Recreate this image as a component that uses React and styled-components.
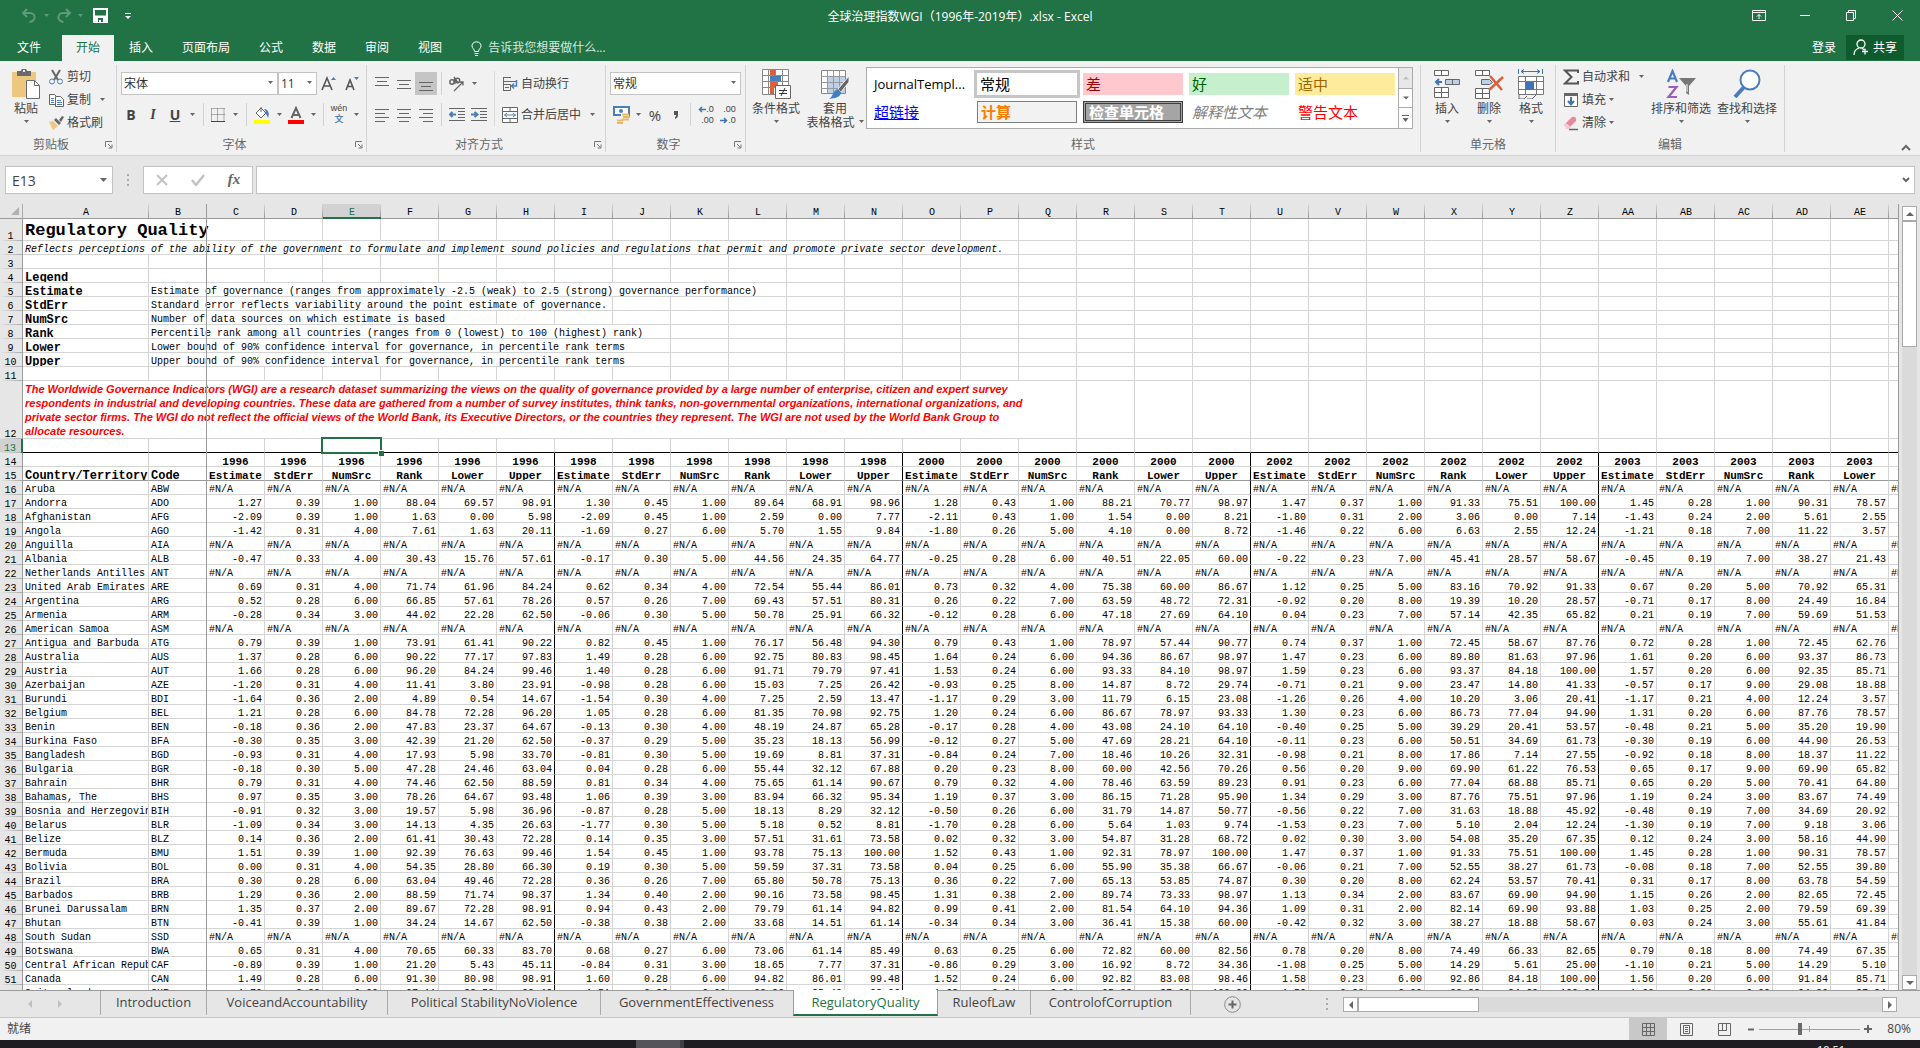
import React from "react";
import styled, { createGlobalStyle, css } from "styled-components";

const GREEN = "#217346";
const UI = '"Open Sans", "Noto Sans CJK SC", sans-serif';
const MONO = '"Liberation Mono", "Noto Sans CJK SC", monospace';

const Global = createGlobalStyle`
  *, *::before, *::after { box-sizing: border-box; }
  html, body { margin: 0; height: 100%; overflow: hidden; }
  #root { height: 100%; }
  button, input, select { font: inherit; color: inherit; margin: 0; }
`;

const Window = styled.div`
  height: 100vh;
  display: flex;
  flex-direction: column;
  overflow: hidden;
  background: #e6e6e6;
  color: #444;
  font: 12px/14px ${UI};
`;

const PlainButton = styled.button.attrs({ type: "button" })`
  display: inline-flex;
  align-items: center;
  justify-content: center;
  padding: 0;
  border: 0;
  background: none;
  white-space: nowrap;
`;

/* ---------- title bar ---------- */

const TitleBar = styled.header`
  display: grid;
  grid-template-columns: 1fr auto 1fr;
  height: 35px;
  background: ${GREEN};
  color: #fff;
`;

const QuickAccess = styled.div`
  display: flex;
  align-items: center;
  padding: 0 0 4px 20px;
`;

const QuickButton = styled(PlainButton)`
  width: ${(p) => p.$w}px;
  height: 20px;
`;

const DocTitle = styled.h1`
  margin: 0;
  font-size: 12px;
  font-weight: 400;
  line-height: 33px;
`;

const WindowButtons = styled.div`
  display: flex;
  justify-content: flex-end;
`;

const WindowButton = styled(PlainButton)`
  width: 46px;
  height: 30px;
`;

const TabRow = styled.nav`
  display: flex;
  height: 26px;
  padding-right: 16px;
  background: ${GREEN};
  color: #fff;
`;

const RibbonTab = styled(PlainButton)`
  padding: 0 14px;
  margin-right: 1px;
  line-height: 22px;
  ${(p) => p.$file && css`padding: 0 20px 0 17px;`}
  ${(p) => p.$active && css`background: #f1f1f1; color: ${GREEN};`}
`;

const TellMe = styled(PlainButton)`
  gap: 6px;
  margin-left: 14px;
  color: #d6e8de;
`;

const SignIn = styled(PlainButton)`
  margin-left: auto;
  padding: 0 10px;
`;

const Share = styled(PlainButton)`
  gap: 4px;
  width: 58px;
  height: 25px;
  background: #0f5b2e;
`;

/* ---------- ribbon ---------- */

const Ribbon = styled.div`
  display: flex;
  height: 95px;
  padding: 4px 0 3px;
  background: #f1f1f1;
  border-bottom: 1px solid #d2d2d2;
`;

const GroupBox = styled.section`
  display: flex;
  flex-direction: column;
  width: ${(p) => p.$w}px;
  border-right: 1px solid #d2d2d2;
`;

const GroupBody = styled.div`
  display: flex;
  flex: 1;
  padding-left: ${(p) => p.$pad || 0}px;
`;

const GroupFooter = styled.div`
  display: flex;
  align-items: center;
  height: 14px;
  color: #666;
`;

const GroupName = styled.span`
  flex: 1;
  text-align: center;
`;

const Launcher = styled(PlainButton)`
  width: 14px;
  height: 14px;
`;

const Stack = styled.div`
  display: flex;
  flex-direction: column;
  gap: ${(p) => p.$gap || 0}px;
  padding-top: ${(p) => p.$top || 0}px;
`;

const Line = styled.div`
  display: flex;
  height: 23px;
`;

const Tool = styled(PlainButton)`
  width: ${(p) => p.$w || 22}px;
  height: 23px;
  ${(p) => p.$on && css`background: #c5c5c5;`}
  ${(p) => p.$bold && css`font-weight: 700; font-size: 14px;`}
  ${(p) => p.$italic && css`font-style: italic; font-family: "Liberation Serif", serif;`}
  ${(p) => p.$underline && css`text-decoration: underline;`}
  ${(p) => p.$large && css`font-size: 15px;`}
  ${(p) => p.$soft && css`color: #666;`}
`;

const TextTool = styled(PlainButton)`
  height: 23px;
  gap: 3px;
  padding-left: 3px;
  justify-content: flex-start;
  width: ${(p) => (p.$w ? `${p.$w}px` : "auto")};
`;

const CaretSlot = styled.span`
  display: inline-flex;
  margin-left: ${(p) => (p.$far ? 6 : 0)}px;
`;

const Rule = styled.span`
  width: 1px;
  margin: 0 4px;
  background: #d2d2d2;
`;

const TallRule = styled.span`
  width: 1px;
  height: 55px;
  margin: 6px 4px 0;
  background: #dadada;
`;

const BigTool = styled(PlainButton)`
  flex-direction: column;
  justify-content: flex-start;
  width: ${(p) => p.$w}px;
  padding-top: 4px;
  line-height: 14px;
  svg:first-child { margin-bottom: 3px; }
`;

const BigCaret = styled.span`
  display: flex;
  align-items: center;
  height: 14px;
  gap: 4px;
`;

const ComboBox = styled.label`
  position: relative;
  display: block;
  width: ${(p) => p.$w}px;
  height: 23px;
  svg { position: absolute; right: 5px; top: 9px; pointer-events: none; }
`;

const ComboSelect = styled.select`
  appearance: none;
  width: 100%;
  height: 23px;
  padding: 0 0 0 2px;
  border: 1px solid #c3c3c3;
  border-radius: 0;
  background: #fff;
  color: #333;
`;

const Gallery = styled.div`
  display: flex;
  width: 547px;
  height: 62px;
  margin: 2px 0 0 2px;
  border: 1px solid #ababab;
  background: #fff;
`;

const GalleryGrid = styled.div`
  flex: 1;
  display: grid;
  grid-template-columns: repeat(5, 100px);
  grid-auto-rows: 22px;
  gap: 6px;
  padding: 5px 0 0 4px;
`;

const StyleCell = styled(PlainButton)`
  justify-content: flex-start;
  padding-left: 3px;
  font-size: ${(p) => p.$size || 15}px;
  line-height: 18px;
  color: ${(p) => p.$fg || "#000"};
  background: ${(p) => p.$bg || "transparent"};
  font-weight: ${(p) => (p.$bold ? 700 : 400)};
  font-style: ${(p) => (p.$italic ? "italic" : "normal")};
  border: ${(p) => p.$border || "0"};
  text-decoration: ${(p) => (p.$link ? "underline" : "none")};
  ${(p) => p.$selected && css`outline: 3px solid #c6c6c6;`}
`;

const GalleryScroll = styled.div`
  display: grid;
  grid-template-rows: 20px 19px 1fr;
  width: 14px;
  border-left: 1px solid #ababab;
  button + button { border-top: 1px solid #ababab; }
  button:first-child { background: #e8e8e8; }
`;

const CollapseSlot = styled.div`
  display: flex;
  flex: 1;
  align-items: flex-end;
  justify-content: flex-end;
  padding-right: 9px;
`;

/* ---------- formula bar ---------- */

const FormulaRow = styled.div`
  display: flex;
  padding: 10px 5px;
`;

const NameBox = styled.label`
  display: flex;
  align-items: center;
  width: 108px;
  height: 28px;
  padding-right: 5px;
  border: 1px solid #c3c3c3;
  background: #fff;
`;

const NameInput = styled.input`
  flex: 1;
  min-width: 0;
  padding: 0 0 0 6px;
  border: 0;
  background: transparent;
  font-size: 14px;
`;

const Dots = styled.span`
  display: flex;
  align-items: center;
  justify-content: center;
  width: ${(p) => p.$w}px;
`;

const FormulaButtons = styled.div`
  display: grid;
  grid-template-columns: repeat(3, 36px);
  height: 28px;
  border: 1px solid #c3c3c3;
  background: #fff;
`;

const FormulaBox = styled.label`
  display: flex;
  flex: 1;
  align-items: center;
  height: 28px;
  margin-left: 3px;
  padding-right: 4px;
  border: 1px solid #c3c3c3;
  background: #fff;
`;

const FormulaInput = styled.input`
  flex: 1;
  border: 0;
  background: transparent;
`;

/* ---------- sheet ---------- */

const SheetArea = styled.main`
  display: flex;
  flex: 1;
  min-height: 0;
`;

const SheetView = styled.div`
  position: relative;
  flex: 1;
  min-width: 0;
  overflow: hidden;
  border-right: 1px solid #9b9b9b;
`;

const FreezeLine = styled.div`
  position: absolute;
  left: 206px;
  top: 0;
  bottom: 0;
  width: 1px;
  background: #9b9b9b;
`;

const Grid = styled.table`
  table-layout: fixed;
  width: 1947px;
  border-collapse: separate;
  border-spacing: 0;
  background: #fff;
  color: #000;
  font: 10px/8px ${MONO};
`;

const Col = styled.col`
  width: ${(p) => p.$w}px;
`;

const Corner = styled.td`
  height: 15px;
  padding: 0 3px 0 0;
  background: #e6e6e6;
  border-right: 1px solid #ababab;
  border-bottom: 1px solid #9b9b9b;
  text-align: right;
  vertical-align: middle;
  line-height: 0;
`;

const ColHead = styled.th`
  height: 15px;
  padding: 4px 0 0;
  font-weight: 400;
  background: linear-gradient(to bottom, #d6d6d6, #9b9b9b) right / 1px 100% no-repeat #e6e6e6;
  border-bottom: 1px solid #9b9b9b;
  ${(p) => p.$on && css`
    background-color: #d2d2d2;
    color: ${GREEN};
    border-bottom: 2px solid ${GREEN};
  `}
`;

const RowHead = styled.th`
  padding: 5px 1px 0 0;
  font-weight: 400;
  vertical-align: bottom;
  background: linear-gradient(to right, #e6e6e6, #ababab) bottom / 100% 1px no-repeat #e6e6e6;
  border-right: 1px solid #9b9b9b;
  ${(p) => p.$on && css`
    background-color: #d2d2d2;
    color: ${GREEN};
    border-right: 2px solid ${GREEN};
  `}
`;

const Row = styled.tr`
  height: ${(p) => p.$h || 14}px;
`;

const Cell = styled.td`
  padding: 5px 2px 0;
  overflow: hidden;
  white-space: nowrap;
  vertical-align: bottom;
  text-align: ${(p) => p.$align || "left"};
  border-right: 1px solid ${(p) => (p.$block ? "#000" : "#d4d4d4")};
  border-bottom: 1px solid ${(p) => p.$under || "#d4d4d4"};
  ${(p) => p.$kind === "title" && css`
    padding: 3px 0 0 2px;
    font-size: 17px;
    font-weight: 700;
    line-height: 18px;
    overflow: visible;
  `}
  ${(p) => p.$kind === "italic" && css`font-style: italic;`}
  ${(p) => p.$kind === "label" && css`padding-right: 0; font-size: 12px; font-weight: 700;`}
  ${(p) => p.$kind === "head" && css`font-size: 11px; font-weight: 700; padding-left: 0; padding-right: 0;`}
  ${(p) => p.$kind === "note" && css`
    padding-top: 0;
    color: #f00;
    font: italic 700 11px/14px "Liberation Sans", Arial, sans-serif;
  `}
  ${(p) => p.$selected && css`position: relative; overflow: visible;`}
`;

const Selection = styled.span`
  position: absolute;
  inset: -2px;
  border: 2px solid ${GREEN};
  &::after {
    content: "";
    position: absolute;
    right: -4px;
    bottom: -4px;
    width: 6px;
    height: 6px;
    background: ${GREEN};
    border: solid #fff;
    border-width: 1px 0 0 1px;
  }
`;

const ScrollColumn = styled.div`
  display: flex;
  flex-direction: column;
  width: 15px;
  margin: 2px 3px 0;
  background: #dadada;
`;

const ScrollButton = styled(PlainButton)`
  width: 15px;
  height: 15px;
  background: #fff;
  border: 1px solid #ababab;
`;

const ScrollThumb = styled.div`
  background: #fff;
  border: 1px solid #ababab;
  ${(p) => (p.$vertical ? css`height: 126px;` : css`width: 121px;`)}
`;

const Spacer = styled.div`
  flex: 1;
`;

/* ---------- sheet tabs ---------- */

const SheetTabs = styled.nav`
  display: flex;
  height: 28px;
  border-top: 1px solid #9b9b9b;
  border-bottom: 1px solid #c6c6c6;
  font-size: 13px;
`;

const TabArrows = styled.div`
  display: flex;
  align-items: center;
  gap: 22px;
  width: 101px;
  padding-left: 26px;
`;

const SheetTab = styled(PlainButton)`
  width: ${(p) => p.$w}px;
  height: 24px;
  padding-bottom: 2px;
  border-right: 1px solid ${(p) => (p.$plain ? "transparent" : "#ababab")};
  ${(p) => p.$active && css`
    margin-top: -1px;
    height: 26px;
    padding-bottom: 1px;
    background: #fff;
    color: ${GREEN};
    border-left: 1px solid #9b9b9b;
    border-right-color: #9b9b9b;
    border-bottom: 2px solid ${GREEN};
  `}
`;

const FirstRule = styled.span`
  width: 1px;
  height: 24px;
  margin-left: -1px;
  background: #ababab;
`;

const AddSheet = styled(PlainButton)`
  width: 82px;
`;

const HScroll = styled.div`
  display: flex;
  width: 554px;
  height: 15px;
  margin: 6px 23px 0 0;
  background: #dadada;
`;

/* ---------- status bar ---------- */

const StatusBar = styled.footer`
  display: flex;
  align-items: center;
  height: 22px;
  padding: 0 9px 0 7px;
  background: #f1f1f1;
`;

const ViewButton = styled(PlainButton)`
  width: 38px;
  height: 22px;
  ${(p) => p.$on && css`background: #c8c8c8;`}
`;

const ZoomStep = styled(PlainButton)`
  width: 16px;
  height: 22px;
`;

const ZoomRange = styled.input`
  appearance: none;
  width: 101px;
  height: 14px;
  background:
    linear-gradient(#a0a0a0, #a0a0a0) 50px 4px / 1px 6px no-repeat,
    linear-gradient(#a0a0a0, #a0a0a0) 0 7px / 100% 1px no-repeat;
  &::-webkit-slider-thumb {
    appearance: none;
    width: 4px;
    height: 12px;
    background: #6a6a6a;
  }
`;

const ZoomValue = styled.span`
  width: 35px;
  text-align: right;
`;

const TaskBar = styled.div`
  display: flex;
  height: 8px;
  overflow: hidden;
  padding-left: 636px;
  background: #1f1d22;
  color: #fff;
  line-height: 14px;
`;

const TaskItem = styled.div`
  width: 48px;
  background: #55545a;
  border-right: 4px solid #3f3e44;
`;

const Clock = styled.time`
  margin-left: auto;
  padding: 3px 75px 0 0;
  font-size: 11px;
`;

/* ---------- icons ---------- */

const Svg = ({ w = 16, h = 16, children, ...rest }) => (
  <svg width={w} height={h} viewBox={`0 0 ${w} ${h}`} fill="none" stroke="#666" aria-hidden="true" {...rest}>
    {children}
  </svg>
);

const Caret = ({ color = "#666", w = 5 }) => (
  <Svg w={w} h={4} stroke="none"><path d={`M0 0h${w}L${w / 2} ${w === 5 ? 3 : 4}z`} fill={color} /></Svg>
);

const Arrow = ({ dir, color = "#666", size = 8 }) => {
  const d = { up: "M4 2L8 6H0z", down: "M4 6L8 2H0z", left: "M2 4L6 0V8z", right: "M6 4L2 0V8z" }[dir];
  return <svg width={size} height={size} viewBox="0 0 8 8" aria-hidden="true"><path d={d} fill={color} /></svg>;
};

const UndoIcon = ({ flip }) => (
  <Svg w={16} h={16} stroke="#5f9a7a" strokeWidth="2">
    <g transform={flip ? "matrix(-1 0 0 1 16 0)" : undefined}>
      <path d="M6 1L2 5l4 4M2 5h7c3 0 5 2 4.500 5-.500 2-2 3.500-5 4" />
    </g>
  </Svg>
);

const SaveIcon = () => (
  <Svg w={15} h={15} stroke="#fff"><path d="M1 1h13v13H1z" strokeWidth="2" /><path d="M1 8h13v6H1z" fill="#fff" /><path d="M5 10h5v4H5z" fill={GREEN} stroke="none" /><path d="M6 12h2v2H6z" fill="#fff" stroke="none" /></Svg>
);

const PasteIcon = () => (
  <Svg w={30} h={30} stroke="none">
    <path d="M1 3h24v25H1z" fill="#eec77e" />
    <path d="M6 2h4c0-3 6-3 6 0h4v5H6z" fill="#6a6a6a" /><path d="M12 1h2v2h-2z" fill="#f1f1f1" />
    <path d="M15.500 11.500h8l5 5v13h-13z" fill="#fff" stroke="#6a6a6a" /><path d="M23.500 11.500v5h5" stroke="#6a6a6a" fill="none" />
  </Svg>
);

const CutIcon = () => (
  <Svg><path d="M4 1l6 10M12 1L6 11" strokeWidth="2" /><circle cx="4" cy="12.500" r="2.500" stroke="#4a7ebb" /><circle cx="12" cy="12.500" r="2.500" stroke="#4a7ebb" /></Svg>
);

const CopyIcon = () => (
  <Svg>
    <path d="M1.500 2.500h5l2 2v8h-7z" fill="#fff" /><path d="M3 6.500h3M3 8.500h3M3 10.500h3" stroke="#4a7ebb" />
    <path d="M7.500 4.500h5l3 3v7h-8z" fill="#fff" /><path d="M9 8.500h4M9 10.500h5M9 12.500h5" stroke="#4a7ebb" />
  </Svg>
);

const BrushIcon = () => (
  <Svg stroke="none"><path d="M1 7l4-1 5 5-5 4z" fill="#eec77e" /><path d="M6 5l2-2 5 5-2 2zM11 5l3-4 2 1-3 5z" fill="#666" /></Svg>
);

const FontSizeIcon = ({ down }) => (
  <Svg w={18} h={18} stroke="#555">
    <path d={down ? "M3 15L7 5l4 10M4.500 11.500h5" : "M2 15L7 3l5 12M4 11h6"} strokeWidth="1.600" />
    <path d={down ? "M11 2h5l-2.500 3z" : "M11 5h5l-2.500-3z"} fill="#4a7ebb" stroke="none" />
  </Svg>
);

const BorderIcon = () => (
  <Svg w={14} h={14}><path d="M.5.5h13M.5 6.500h13M.5.5v13M6.500.5v13M13 .5v13" strokeDasharray="1 1" /><path d="M0 13.500h14" stroke="#444" /></Svg>
);

const FillIcon = () => (
  <Svg w={18} h={18}><path d="M3 7l5-5 5 5-5 5z" fill="#fff" /><path d="M8 6V1" /><path d="M11 3c4 0 6 4 4 9-1-3-2-4-4-5l2-1z" fill="#4a7ebb" stroke="none" /><path d="M1 14h16v4H1z" fill="#ff0" stroke="none" /></Svg>
);

const FontColorIcon = () => (
  <Svg w={18} h={18}><path d="M4.500 12L9 2l4.500 10M6 9h6" strokeWidth="2" /><path d="M1 14h16v4H1z" fill="#f00" stroke="none" /></Svg>
);

const PhoneticMark = styled.span`
  display: flex;
  flex-direction: column;
  align-items: center;
  font: 9px/10px "Liberation Sans", "Noto Sans CJK SC", sans-serif;
  b { line-height: 13px; font-weight: 500; color: #3f74b0; }
`;

const Bars = ({ rows, align = "center" }) => (
  <Svg w={14} h={14}>
    {rows.map(([y, w]) => {
      const x = align === "left" ? 0 : align === "right" ? 14 - w : (14 - w) / 2;
      return <path key={y} d={`M${x} ${y}.500h${w}`} />;
    })}
  </Svg>
);

const OrientIcon = () => (
  <Svg w={18} h={18}><circle cx="4" cy="7" r="2.200" strokeWidth="1.500" /><path d="M6 4l1 5M6 2l4 6" strokeWidth="1.500" /><circle cx="9.500" cy="5.500" r="2.200" strokeWidth="1.500" /><path d="M6 16L15 7M11.500 7H15v3.500" strokeWidth="1.300" /></Svg>
);

const IndentIcon = ({ right }) => (
  <Svg w={17} h={14}>
    <path d="M0 .5h16M9 3.500h7M9 6.500h7M9 9.500h7M0 12.500h16" />
    <path d={right ? "M0 6.500h6M3.500 4l3 2.500-3 2.500" : "M7 6.500H1M3.500 4L1 6.500 3.500 9"} stroke="#4a7ebb" strokeWidth="2" />
  </Svg>
);

const WrapIcon = () => (
  <Svg><path d="M1.500 1v14M1 1.500h8M1 5.500h13M1.500 8.500h7v6h-7M3 11.500h4" /><path d="M14.500 4v6H10M12 7.500L9.500 10l2.500 2.500" stroke="#4a7ebb" strokeWidth="1.500" /></Svg>
);

const MergeIcon = () => (
  <Svg><path d="M.5.5h15v15H.5zM.5 4.500h15M.5 11.500h15M8 .5v4M8 11.500v4" fill="#fff" /><path d="M2.500 8h11M5 6L2.500 8 5 10M11 6l2.500 2L11 10" stroke="#4a7ebb" /></Svg>
);

const CurrencyIcon = () => (
  <Svg w={19} h={20}><path d="M2 2h15v8H2z" stroke="#4a7ebb" strokeWidth="2" fill="#fff" /><circle cx="9" cy="6" r="2" fill="#4a7ebb" stroke="none" /><path d="M9 9h8v9h-8z" fill="#f1f1f1" stroke="none" /><path d="M10 9.500h7M11 12h7M10 14.500h7M5 15.500h6M5 18h6" stroke="#e8b766" strokeWidth="1.800" /></Svg>
);

const DecimalMark = styled.span`
  display: grid;
  font: 9px/11px "Liberation Sans", sans-serif;
  justify-items: end;
  span { display: flex; align-items: center; height: 11px; }
`;

const MiniArrow = ({ right }) => (
  <Svg w={8} h={7} stroke="#3f74b0" strokeWidth="1.500">
    <path d={right ? "M0 3.500h6M4 1l2.500 2.500L4 6" : "M8 3.500H2M4 1L1.500 3.500 4 6"} />
  </Svg>
);

const CondIcon = () => (
  <Svg w={30} h={30}>
    <path d="M1.500.5h26v25h-26zM7.500.5v25M14.500.5v25M21.500.5v25M1.500 6.500h26M1.500 12.500h26M1.500 18.500h26" fill="#fff" stroke="#888" />
    <path d="M9 1h5v5H9zM9 13h8v5H9zM9 19h4v6H9z" fill="#d9603b" stroke="none" /><path d="M9 7h11v5H9z" fill="#4a7ebb" stroke="none" />
    <path d="M14.500 16.500h15v13h-15z" fill="#fff" /><path d="M18 21.500h8M18 24.500h8M24 19l-4 8" stroke="#333" />
  </Svg>
);

const TableIcon = () => (
  <Svg w={30} h={30}>
    <path d="M1.500 1.500h24v23h-24z" fill="#fff" stroke="#888" /><path d="M8 7h17v17H8z" fill="#bcd0e8" stroke="none" />
    <path d="M7.500 1.500v23M13.500 1.500v23M19.500 1.500v23M1.500 7.500h24M1.500 13.500h24M1.500 19.500h24" stroke="#999" />
    <path d="M29 7v6l-8 10-3-3z" fill="#666" stroke="#f1f1f1" /><path d="M18 20l3 3c0 5-5 6-12 7 4-2 4-9 9-10z" fill="#3f7fbf" stroke="none" />
  </Svg>
);

const InsertIcon = () => (
  <Svg w={28} h={30}><path d="M1.500 1.500h14v5h-14zM8.500 1.500v5M1.500 18.500h14v10h-14zM8.500 18.500v10M1.500 23.500h14" fill="#fff" /><path d="M12.500 10.500h14v5h-14zM19.500 10.500v5" fill="#bcd0e8" /><path d="M9 13H3M6 10l-3 3 3 3" stroke="#3f74b0" strokeWidth="2" /></Svg>
);

const DeleteIcon = () => (
  <Svg w={30} h={30}><path d="M1.500 1.500h14v5h-14zM8.500 1.500v5M1.500 19.500h14v10h-14zM8.500 19.500v10M1.500 24.500h14" fill="#fff" /><path d="M7.500 10.500h8l3 3-3 2h-8z" fill="#bcd0e8" /><path d="M16 7l12 14M29 8L15 21" stroke="#d9603b" strokeWidth="2.500" /></Svg>
);

const FormatIcon = () => (
  <Svg w={30} h={30}><path d="M2.500 0v5M26.500 0v5M5 2.500h19M8 .5l-3 2 3 2M21 .5l3 2-3 2" stroke="#3f74b0" /><path d="M2.500 7.500h25v18h-25zM9.500 7.500v18M20.500 7.500v18M2.500 12.500h25M2.500 20.500h25" fill="#fff" stroke="#777" /><path d="M10 13h8v8h-8z" fill="#3f74b0" stroke="none" /><path d="M3 26v4h5l3-3M11 30h5l4-4" /></Svg>
);

const SumIcon = () => (
  <Svg stroke="#555" strokeWidth="2"><path d="M15 4V1.500H2L8.500 8 2 14.500h13V12" /></Svg>
);

const FillDownIcon = () => (
  <Svg><path d="M1.500 1.500h13v13h-13z" fill="#fff" /><path d="M1 1h14v3H1z" fill="#666" stroke="none" /><path d="M8 5v7M5 9l3 3.500L11 9" stroke="#3f74b0" strokeWidth="2" /></Svg>
);

const EraserIcon = () => (
  <Svg><path d="M1 10l8-8c3-1 5 1 4 4L6 13z" fill="#e8889b" stroke="none" /><path d="M1 10l2-2 5 4-2 2H3z" fill="#f7c9d1" stroke="none" /><path d="M6 14.500h9" strokeWidth="1.500" /></Svg>
);

const SortMark = () => (
  <Svg w={30} h={30}>
    <path d="M2 13L6.500 2 11 13M3.500 9.500h6" stroke="#4a7ebb" strokeWidth="2.200" /><path d="M2.500 18h8L2.500 28h8.500" stroke="#9a5fb5" strokeWidth="2.200" />
    <path d="M13 9h17l-7 8v9l-3-2v-7z" fill="#777" stroke="none" /><path d="M21 15v8" stroke="#fff" />
  </Svg>
);

const FindIcon = () => (
  <Svg w={30} h={30}><path d="M3 28L13 17" stroke="#4a7ebb" strokeWidth="4" /><circle cx="18" cy="11" r="9.500" fill="#fff" stroke="#4a7ebb" strokeWidth="2" /></Svg>
);

const LauncherIcon = () => (
  <Svg w={8} h={8}><path d="M.5 6V.5H7M3 3l3.500 3.500M7 3.500V7H3.500" stroke="#777" /></Svg>
);

const DotsIcon = () => (
  <Svg w={2} h={12} stroke="none"><path d="M0 0h2v2H0zM0 5h2v2H0zM0 10h2v2H0z" fill="#ababab" /></Svg>
);

/* ---------- ribbon parts ---------- */

const Group = ({ name, w, pad, launcher, children }) => (
  <GroupBox $w={w} aria-label={name}>
    <GroupBody $pad={pad}>{children}</GroupBody>
    <GroupFooter>
      <GroupName>{name}</GroupName>
      {launcher && <Launcher aria-label={`${name}设置`}><LauncherIcon /></Launcher>}
    </GroupFooter>
  </GroupBox>
);

const Drop = ({ w = 12, label }) => <Tool $w={w} aria-label={label}><Caret /></Tool>;

const Combo = ({ w, label, value }) => (
  <ComboBox $w={w}>
    <ComboSelect aria-label={label} defaultValue={value}><option>{value}</option></ComboSelect>
    <Caret />
  </ComboBox>
);

const Big = ({ w, icon, label }) => (
  <BigTool $w={w}>{icon}<span>{label}</span><BigCaret><Caret /></BigCaret></BigTool>
);

const RibbonBar = () => (
  <Ribbon>
    <Group name="剪贴板" w={117} pad={7} launcher>
      <Big w={38} icon={<PasteIcon />} label="粘贴" />
      <Stack>
        <TextTool><CutIcon />剪切</TextTool>
        <TextTool><CopyIcon />复制<CaretSlot $far><Caret /></CaretSlot></TextTool>
        <TextTool><BrushIcon />格式刷</TextTool>
      </Stack>
    </Group>
    <Group name="字体" w={250} pad={4} launcher>
      <Stack $top={7} $gap={8}>
        <Line>
          <Combo w={157} label="字体" value="宋体" />
          <Combo w={39} label="字号" value="11" />
          <Tool $w={24} aria-label="增大字号"><FontSizeIcon /></Tool>
          <Tool $w={22} aria-label="减小字号"><FontSizeIcon down /></Tool>
        </Line>
        <Line>
          <Tool $w={20} $bold>B</Tool>
          <Tool $w={24} $bold $italic>I</Tool>
          <Tool $w={20} $bold $underline>U</Tool>
          <Drop w={14} label="下划线选项" />
          <Rule />
          <Tool $w={20} aria-label="边框"><BorderIcon /></Tool>
          <Drop w={14} label="边框选项" />
          <Rule />
          <Tool aria-label="填充颜色"><FillIcon /></Tool>
          <Drop label="填充颜色选项" />
          <Tool aria-label="字体颜色"><FontColorIcon /></Tool>
          <Drop label="字体颜色选项" />
          <Rule />
          <Tool><PhoneticMark>wén<b>文</b></PhoneticMark></Tool>
          <Drop label="拼音选项" />
        </Line>
      </Stack>
    </Group>
    <Group name="对齐方式" w={239} pad={4} launcher>
      <Stack $top={7} $gap={8}>
        <Line>
          <Tool aria-label="顶端对齐"><Bars rows={[[0, 14], [4, 10], [8, 14]]} /></Tool>
          <Tool aria-label="垂直居中"><Bars rows={[[3, 14], [7, 10], [11, 14]]} /></Tool>
          <Tool $on aria-label="底端对齐"><Bars rows={[[5, 14], [9, 10], [13, 14]]} /></Tool>
          <Rule />
          <Tool aria-label="方向"><OrientIcon /></Tool>
          <Drop label="方向选项" />
        </Line>
        <Line>
          <Tool aria-label="左对齐"><Bars align="left" rows={[[1, 14], [5, 10], [9, 14], [13, 10]]} /></Tool>
          <Tool aria-label="居中"><Bars rows={[[1, 14], [5, 10], [9, 14], [13, 10]]} /></Tool>
          <Tool aria-label="右对齐"><Bars align="right" rows={[[1, 14], [5, 10], [9, 14], [13, 10]]} /></Tool>
          <Rule />
          <Tool aria-label="减少缩进量"><IndentIcon /></Tool>
          <Tool aria-label="增加缩进量"><IndentIcon right /></Tool>
        </Line>
      </Stack>
      <TallRule />
      <Stack $top={7} $gap={8}>
        <TextTool><WrapIcon />自动换行</TextTool>
        <TextTool><MergeIcon />合并后居中<CaretSlot $far><Caret /></CaretSlot></TextTool>
      </Stack>
    </Group>
    <Group name="数字" w={140} pad={4} launcher>
      <Stack $top={7} $gap={8}>
        <Combo w={131} label="数字格式" value="常规" />
        <Line>
          <Tool aria-label="会计数字格式"><CurrencyIcon /></Tool>
          <Drop label="会计格式选项" />
          <Tool $large>%</Tool>
          <Tool $w={20} aria-label="千位分隔样式"><Svg w={6} h={9} stroke="none"><path d="M1 1h4v4c0 2-1 3-3 4v-2c1 0 1-1 1-2H1z" fill="#555" /></Svg></Tool>
          <Rule />
          <Tool><DecimalMark><span><MiniArrow />.0</span><span>.00</span></DecimalMark></Tool>
          <Tool><DecimalMark><span>.00</span><span><MiniArrow right />.0</span></DecimalMark></Tool>
        </Line>
      </Stack>
    </Group>
    <Group name="样式" w={675}>
      <Big w={60} icon={<CondIcon />} label="条件格式" />
      <BigTool $w={58}><TableIcon /><span>套用</span><BigCaret>表格格式<Caret /></BigCaret></BigTool>
      <Gallery>
        <GalleryGrid>
          <StyleCell $size={13}>JournalTempl...</StyleCell>
          <StyleCell $selected>常规</StyleCell>
          <StyleCell $bg="#ffc7ce" $fg="#9c0006">差</StyleCell>
          <StyleCell $bg="#c6efce" $fg="#006100">好</StyleCell>
          <StyleCell $bg="#ffeb9c" $fg="#9c6500">适中</StyleCell>
          <StyleCell $fg="#00f" $link>超链接</StyleCell>
          <StyleCell $bg="#f2f2f2" $fg="#fa7d00" $bold $border="1px solid #7f7f7f">计算</StyleCell>
          <StyleCell $bg="#a5a5a5" $fg="#fff" $bold $border="3px double #3f3f3f">检查单元格</StyleCell>
          <StyleCell $fg="#7f7f7f" $italic>解释性文本</StyleCell>
          <StyleCell $fg="#f00">警告文本</StyleCell>
        </GalleryGrid>
        <GalleryScroll>
          <PlainButton aria-label="上一行"><Arrow dir="up" color="#bbb" size={6} /></PlainButton>
          <PlainButton aria-label="下一行"><Arrow dir="down" size={6} /></PlainButton>
          <PlainButton aria-label="其他"><Svg w={7} h={8}><path d="M0 1.500h7" /><path d="M.5 4h6l-3 4z" fill="#666" stroke="none" /></Svg></PlainButton>
        </GalleryScroll>
      </Gallery>
    </Group>
    <Group name="单元格" w={135} pad={5}>
      <Big w={42} icon={<InsertIcon />} label="插入" />
      <Big w={42} icon={<DeleteIcon />} label="删除" />
      <Big w={42} icon={<FormatIcon />} label="格式" />
    </Group>
    <Group name="编辑" w={229} pad={4}>
      <Stack>
        <TextTool $w={88}><SumIcon />自动求和<CaretSlot $far><Caret /></CaretSlot></TextTool>
        <TextTool><FillDownIcon />填充<CaretSlot><Caret /></CaretSlot></TextTool>
        <TextTool><EraserIcon />清除<CaretSlot><Caret /></CaretSlot></TextTool>
      </Stack>
      <Big w={66} icon={<SortMark />} label="排序和筛选" />
      <Big w={66} icon={<FindIcon />} label="查找和选择" />
    </Group>
    <CollapseSlot>
      <PlainButton aria-label="折叠功能区"><Svg w={10} h={8}><path d="M1 6l4-4 4 4" strokeWidth="2" /></Svg></PlainButton>
    </CollapseSlot>
  </Ribbon>
);

/* ---------- sheet data ---------- */

const LETTERS = Array.from({ length: 32 }, (_, i) =>
  i < 26 ? String.fromCharCode(65 + i) : "A" + String.fromCharCode(39 + i)
);
const YEARS = ["1996", "1998", "2000", "2002", "2003"];
const MEASURES = ["Estimate", "StdErr", "NumSrc", "Rank", "Lower", "Upper"];

const LEGEND = [
  ["Estimate", "Estimate of governance (ranges from approximately -2.5 (weak) to 2.5 (strong) governance performance)", 11],
  ["StdErr", "Standard error reflects variability around the point estimate of governance.", 8],
  ["NumSrc", "Number of data sources on which estimate is based", 6],
  ["Rank", "Percentile rank among all countries (ranges from 0 (lowest) to 100 (highest) rank)", 9],
  ["Lower", "Lower bound of 90% confidence interval for governance, in percentile rank terms", 9],
  ["Upper", "Upper bound of 90% confidence interval for governance, in percentile rank terms", 9],
];

const COUNTRIES = `Aruba|ABW|
Andorra|ADO|1.27 0.39 1.00 88.04 69.57 98.91 1.30 0.45 1.00 89.64 68.91 98.96 1.28 0.43 1.00 88.21 70.77 98.97 1.47 0.37 1.00 91.33 75.51 100.00 1.45 0.28 1.00 90.31 78.57
Afghanistan|AFG|-2.09 0.39 1.00 1.63 0.00 5.98 -2.09 0.45 1.00 2.59 0.00 7.77 -2.11 0.43 1.00 1.54 0.00 8.21 -1.80 0.31 2.00 3.06 0.00 7.14 -1.43 0.24 2.00 5.61 2.55
Angola|AGO|-1.42 0.31 4.00 7.61 1.63 20.11 -1.69 0.27 6.00 5.70 1.55 9.84 -1.80 0.26 5.00 4.10 0.00 8.72 -1.46 0.22 6.00 6.63 2.55 12.24 -1.21 0.18 7.00 11.22 3.57
Anguilla|AIA|
Albania|ALB|-0.47 0.33 4.00 30.43 15.76 57.61 -0.17 0.30 5.00 44.56 24.35 64.77 -0.25 0.28 6.00 40.51 22.05 60.00 -0.22 0.23 7.00 45.41 28.57 58.67 -0.45 0.19 7.00 38.27 21.43
Netherlands Antilles|ANT|
United Arab Emirates|ARE|0.69 0.31 4.00 71.74 61.96 84.24 0.62 0.34 4.00 72.54 55.44 86.01 0.73 0.32 4.00 75.38 60.00 86.67 1.12 0.25 5.00 83.16 70.92 91.33 0.67 0.20 5.00 70.92 65.31
Argentina|ARG|0.52 0.28 6.00 66.85 57.61 78.26 0.57 0.26 7.00 69.43 57.51 80.31 0.26 0.22 7.00 63.59 48.72 72.31 -0.92 0.20 8.00 19.39 10.20 28.57 -0.71 0.17 8.00 24.49 16.84
Armenia|ARM|-0.28 0.34 3.00 44.02 22.28 62.50 -0.06 0.30 5.00 50.78 25.91 66.32 -0.12 0.28 6.00 47.18 27.69 64.10 0.04 0.23 7.00 57.14 42.35 65.82 0.21 0.19 7.00 59.69 51.53
American Samoa|ASM|
Antigua and Barbuda|ATG|0.79 0.39 1.00 73.91 61.41 90.22 0.82 0.45 1.00 76.17 56.48 94.30 0.79 0.43 1.00 78.97 57.44 90.77 0.74 0.37 1.00 72.45 58.67 87.76 0.72 0.28 1.00 72.45 62.76
Australia|AUS|1.37 0.28 6.00 90.22 77.17 97.83 1.49 0.28 6.00 92.75 80.83 98.45 1.64 0.24 6.00 94.36 86.67 98.97 1.47 0.23 6.00 89.80 81.63 97.96 1.61 0.20 6.00 93.37 86.73
Austria|AUT|1.66 0.28 6.00 96.20 84.24 99.46 1.40 0.28 6.00 91.71 79.79 97.41 1.53 0.24 6.00 93.33 84.10 98.97 1.59 0.23 6.00 93.37 84.18 100.00 1.57 0.20 6.00 92.35 85.71
Azerbaijan|AZE|-1.20 0.31 4.00 11.41 3.80 23.91 -0.98 0.28 6.00 15.03 7.25 26.42 -0.93 0.25 8.00 14.87 8.72 29.74 -0.71 0.21 9.00 23.47 14.80 41.33 -0.57 0.17 9.00 29.08 18.88
Burundi|BDI|-1.64 0.36 2.00 4.89 0.54 14.67 -1.54 0.30 4.00 7.25 2.59 13.47 -1.17 0.29 3.00 11.79 6.15 23.08 -1.26 0.26 4.00 10.20 3.06 20.41 -1.17 0.21 4.00 12.24 3.57
Belgium|BEL|1.21 0.28 6.00 84.78 72.28 96.20 1.05 0.28 6.00 81.35 70.98 92.75 1.20 0.24 6.00 86.67 78.97 93.33 1.30 0.23 6.00 86.73 77.04 94.90 1.31 0.20 6.00 87.76 78.57
Benin|BEN|-0.18 0.36 2.00 47.83 23.37 64.67 -0.13 0.30 4.00 48.19 24.87 65.28 -0.17 0.28 4.00 43.08 24.10 64.10 -0.40 0.25 5.00 39.29 20.41 53.57 -0.48 0.21 5.00 35.20 19.90
Burkina Faso|BFA|-0.30 0.35 3.00 42.39 21.20 62.50 -0.37 0.29 5.00 35.23 18.13 56.99 -0.12 0.27 5.00 47.69 28.21 64.10 -0.11 0.23 6.00 50.51 34.69 61.73 -0.30 0.19 6.00 44.90 26.53
Bangladesh|BGD|-0.93 0.31 4.00 17.93 5.98 33.70 -0.81 0.30 5.00 19.69 8.81 37.31 -0.84 0.24 7.00 18.46 10.26 32.31 -0.98 0.21 8.00 17.86 7.14 27.55 -0.92 0.18 8.00 18.37 11.22
Bulgaria|BGR|-0.18 0.30 5.00 47.28 24.46 63.04 0.04 0.28 6.00 55.44 32.12 67.88 0.20 0.23 8.00 60.00 42.56 70.26 0.56 0.20 9.00 69.90 61.22 76.53 0.65 0.17 9.00 69.90 65.82
Bahrain|BHR|0.79 0.31 4.00 74.46 62.50 88.59 0.81 0.34 4.00 75.65 61.14 90.67 0.79 0.32 4.00 78.46 63.59 89.23 0.91 0.23 6.00 77.04 68.88 85.71 0.65 0.20 5.00 70.41 64.80
Bahamas, The|BHS|0.97 0.35 3.00 78.26 64.67 93.48 1.06 0.39 3.00 83.94 66.32 95.34 1.19 0.37 3.00 86.15 71.28 95.90 1.34 0.29 3.00 87.76 75.51 97.96 1.19 0.24 3.00 83.67 74.49
Bosnia and Herzegovina|BIH|-0.91 0.32 3.00 19.57 5.98 36.96 -0.87 0.28 5.00 18.13 8.29 32.12 -0.50 0.26 6.00 31.79 14.87 50.77 -0.56 0.22 7.00 31.63 18.88 45.92 -0.48 0.19 7.00 34.69 20.92
Belarus|BLR|-1.09 0.34 3.00 14.13 4.35 26.63 -1.77 0.30 5.00 5.18 0.52 8.81 -1.70 0.28 6.00 5.64 1.03 9.74 -1.53 0.23 7.00 5.10 2.04 12.24 -1.30 0.19 7.00 9.18 3.06
Belize|BLZ|0.14 0.36 2.00 61.41 30.43 72.28 0.14 0.35 3.00 57.51 31.61 73.58 0.02 0.32 3.00 54.87 31.28 68.72 0.02 0.30 3.00 54.08 35.20 67.35 0.12 0.24 3.00 58.16 44.90
Bermuda|BMU|1.51 0.39 1.00 92.39 76.63 99.46 1.54 0.45 1.00 93.78 75.13 100.00 1.52 0.43 1.00 92.31 78.97 100.00 1.47 0.37 1.00 91.33 75.51 100.00 1.45 0.28 1.00 90.31 78.57
Bolivia|BOL|0.00 0.31 4.00 54.35 28.80 66.30 0.19 0.30 5.00 59.59 37.31 73.58 0.04 0.25 6.00 55.90 35.38 66.67 -0.06 0.21 7.00 52.55 38.27 61.73 -0.08 0.18 7.00 52.55 39.80
Brazil|BRA|0.30 0.28 6.00 63.04 49.46 72.28 0.36 0.26 7.00 65.80 50.78 75.13 0.36 0.22 7.00 65.13 53.85 74.87 0.30 0.20 8.00 62.24 53.57 70.41 0.31 0.17 8.00 63.78 54.59
Barbados|BRB|1.29 0.36 2.00 88.59 71.74 98.37 1.34 0.40 2.00 90.16 73.58 98.45 1.31 0.38 2.00 89.74 73.33 98.97 1.13 0.34 2.00 83.67 69.90 94.90 1.15 0.26 2.00 82.65 72.45
Brunei Darussalam|BRN|1.35 0.37 2.00 89.67 72.28 98.91 0.94 0.43 2.00 79.79 61.14 94.82 0.99 0.41 2.00 81.54 64.10 94.36 1.09 0.31 2.00 82.14 69.90 93.88 1.03 0.25 2.00 79.59 69.39
Bhutan|BTN|-0.41 0.39 1.00 34.24 14.67 62.50 -0.38 0.38 2.00 33.68 14.51 61.14 -0.34 0.34 3.00 36.41 15.38 60.00 -0.42 0.32 3.00 38.27 18.88 58.67 0.03 0.24 3.00 55.61 41.84
South Sudan|SSD|
Botswana|BWA|0.65 0.31 4.00 70.65 60.33 83.70 0.68 0.27 6.00 73.06 61.14 85.49 0.63 0.25 6.00 72.82 60.00 82.56 0.78 0.20 8.00 74.49 66.33 82.65 0.79 0.18 8.00 74.49 67.35
Central African Republic|CAF|-0.89 0.39 1.00 21.20 5.43 45.11 -0.84 0.31 3.00 18.65 7.77 37.31 -0.86 0.29 3.00 16.92 8.72 34.36 -1.08 0.25 5.00 14.29 5.61 25.00 -1.10 0.21 5.00 14.29 5.10
Canada|CAN|1.49 0.28 6.00 91.30 80.98 98.91 1.60 0.28 6.00 94.82 86.01 99.48 1.52 0.24 6.00 92.82 83.08 98.46 1.58 0.23 6.00 92.86 84.18 100.00 1.56 0.20 6.00 91.84 85.71
Switzerland|CHE|1.70 0.28 6.00 97.11 88.59 99.46 1.51 0.28 6.00 93.26 85.49 98.96 1.62 0.24 6.00 95.38 87.69 100.00 1.59 0.23 6.00 93.88 84.69 100.00 1.60 0.20 6.00 94.39 87.24`
  .split("\n")
  .map((line) => {
    const [name, code, values] = line.split("|");
    return { name, code, values: values ? values.split(" ") : null };
  });

const Blank = ({ count, under }) =>
  Array.from({ length: count }, (_, i) => <Cell key={i} $under={under} />);

const SheetRow = ({ n, h, on, children }) => (
  <Row $h={h}>
    <RowHead scope="row" $on={on}>{n}</RowHead>
    {children}
  </Row>
);

const Sheet = () => (
  <Grid>
    <colgroup>
      <Col $w={23} />
      <Col $w={126} />
      {LETTERS.slice(1).map((l) => <Col key={l} $w={58} />)}
    </colgroup>
    <thead>
      <tr>
        <Corner><Svg w={8} h={8} stroke="none"><path d="M8 0v8H0z" fill="#b1b1b1" /></Svg></Corner>
        {LETTERS.map((l) => <ColHead key={l} scope="col" $on={l === "E"}>{l}</ColHead>)}
      </tr>
    </thead>
    <tbody>
      <SheetRow n={1} h={22}><Cell $kind="title" colSpan={2}>Regulatory Quality</Cell><Blank count={30} /></SheetRow>
      <SheetRow n={2}>
        <Cell $kind="italic" colSpan={16}>
          Reflects perceptions of the ability of the government to formulate and implement sound policies and regulations that permit and promote private sector development.
        </Cell>
        <Blank count={16} />
      </SheetRow>
      <SheetRow n={3}><Blank count={32} /></SheetRow>
      <SheetRow n={4}><Cell $kind="label">Legend</Cell><Blank count={31} /></SheetRow>
      {LEGEND.map(([term, text, span], i) => (
        <SheetRow key={term} n={i + 5}>
          <Cell $kind="label">{term}</Cell>
          <Cell colSpan={span}>{text}</Cell>
          <Blank count={31 - span} />
        </SheetRow>
      ))}
      <SheetRow n={11}><Blank count={32} /></SheetRow>
      <SheetRow n={12} h={58}>
        <Cell $kind="note" colSpan={17}>
          The Worldwide Governance Indicators (WGI) are a research dataset summarizing the views on the quality of governance provided by a large number of enterprise, citizen and expert survey<br />
          respondents in industrial and developing countries. These data are gathered from a number of survey institutes, think tanks, non-governmental organizations, international organizations, and<br />
          private sector firms. The WGI do not reflect the official views of the World Bank, its Executive Directors, or the countries they represent. The WGI are not used by the World Bank Group to<br />
          allocate resources.
        </Cell>
        <Blank count={15} />
      </SheetRow>
      <SheetRow n={13} on>
        <Blank count={4} under="#000" />
        <Cell $under="#000" $selected><Selection /></Cell>
        <Blank count={27} under="#000" />
      </SheetRow>
      <SheetRow n={14}>
        <Blank count={2} />
        {YEARS.flatMap((y) => MEASURES.map((m, i) => (
          <Cell key={y + m} $kind="head" $align="center" $block={i === 5}>{y}</Cell>
        )))}
      </SheetRow>
      <SheetRow n={15}>
        <Cell $kind="label" $under="#9b9b9b">Country/Territory</Cell>
        <Cell $kind="label" $under="#9b9b9b">Code</Cell>
        {YEARS.flatMap((y) => MEASURES.map((m, i) => (
          <Cell key={y + m} $kind="head" $align="center" $under="#9b9b9b" $block={i === 5}>{m}</Cell>
        )))}
      </SheetRow>
      {COUNTRIES.map(({ name, code, values }, r) => (
        <SheetRow key={code} n={r + 16}>
          <Cell>{name}</Cell>
          <Cell>{code}</Cell>
          {Array.from({ length: 30 }, (_, i) => (
            <Cell key={i} $align={values ? "right" : "left"} $block={i % 6 === 5}>{values ? values[i] : "#N/A"}</Cell>
          ))}
        </SheetRow>
      ))}
    </tbody>
  </Grid>
);

/* ---------- page ---------- */

const RIBBON_TABS = ["插入", "页面布局", "公式", "数据", "审阅", "视图"];
const SHEETS = [
  ["Introduction", 106],
  ["VoiceandAccountability", 181],
  ["Political StabilityNoViolence", 213],
  ["GovernmentEffectiveness", 192],
  ["RegulatoryQuality", 145],
  ["RuleofLaw", 93],
  ["ControlofCorruption", 160],
];

export default function App() {
  return (
    <Window>
      <Global />
      <TitleBar>
        <QuickAccess>
          <QuickButton $w={18} aria-label="撤消"><UndoIcon /></QuickButton>
          <QuickButton $w={16} aria-label="撤消列表"><Caret color="#5f9a7a" /></QuickButton>
          <QuickButton $w={20} aria-label="恢复"><UndoIcon flip /></QuickButton>
          <QuickButton $w={12} aria-label="恢复列表"><Caret color="#5f9a7a" /></QuickButton>
          <QuickButton $w={28} aria-label="保存"><SaveIcon /></QuickButton>
          <QuickButton $w={28} aria-label="自定义快速访问工具栏">
            <Svg w={6} h={8} stroke="#fff"><path d="M0 1.500h6" /><path d="M0 4h6L3 7z" fill="#fff" stroke="none" /></Svg>
          </QuickButton>
        </QuickAccess>
        <DocTitle>全球治理指数WGI（1996年-2019年）.xlsx - Excel</DocTitle>
        <WindowButtons>
          <WindowButton aria-label="功能区显示选项"><Svg w={14} h={11} stroke="#fff"><path d="M.5.5h13v10H.5zM.5 2.500h13M7 9V4.500M5 6.500l2-2 2 2" /></Svg></WindowButton>
          <WindowButton aria-label="最小化"><Svg w={10} h={10} stroke="#fff"><path d="M0 5.500h10" /></Svg></WindowButton>
          <WindowButton aria-label="还原"><Svg w={10} h={11} stroke="#fff"><path d="M.5 2.500h7v8h-7zM2.500 2.500v-2h7v8h-2" /></Svg></WindowButton>
          <WindowButton aria-label="关闭"><Svg w={11} h={11} stroke="#fff"><path d="M.5.5l10 10M10.500.5l-10 10" /></Svg></WindowButton>
        </WindowButtons>
      </TitleBar>
      <TabRow>
        <RibbonTab $file>文件</RibbonTab>
        <RibbonTab $active>开始</RibbonTab>
        {RIBBON_TABS.map((t) => <RibbonTab key={t}>{t}</RibbonTab>)}
        <TellMe>
          <Svg w={11} h={15} stroke="#fff"><path d="M3.500 10.500C3.500 8 1 7.500 1 4.800 1 2.500 3 .8 5.500.8S10 2.500 10 4.800c0 2.700-2.500 3.200-2.500 5.700zM3.500 12.500h4M4 14.500h3" /></Svg>
          告诉我您想要做什么...
        </TellMe>
        <SignIn>登录</SignIn>
        <Share>
          <Svg w={16} h={17} stroke="#fff" strokeWidth="1.300"><circle cx="8" cy="5" r="4" /><path d="M1 16c0-4 2-6 5-7M9 9l2 2M12 9.500v6M9 12.500h6" /></Svg>
          共享
        </Share>
      </TabRow>
      <RibbonBar />
      <FormulaRow>
        <NameBox>
          <NameInput aria-label="名称框" defaultValue="E13" />
          <Caret w={7} />
        </NameBox>
        <Dots $w={30}><DotsIcon /></Dots>
        <FormulaButtons>
          <PlainButton aria-label="取消"><Svg w={12} h={12} stroke="#c3c3c3" strokeWidth="2"><path d="M1 1l10 10M11 1L1 11" /></Svg></PlainButton>
          <PlainButton aria-label="输入"><Svg w={14} h={12} stroke="#c3c3c3" strokeWidth="2.500"><path d="M1 6l4 5 8-10" /></Svg></PlainButton>
          <Tool $w={36} $bold $italic $large $soft>fx</Tool>
        </FormulaButtons>
        <FormulaBox>
          <FormulaInput aria-label="编辑栏" defaultValue="" />
          <Svg w={8} h={8}><path d="M1 2l3 3 3-3" strokeWidth="2" /></Svg>
        </FormulaBox>
      </FormulaRow>
      <SheetArea>
        <SheetView>
          <Sheet />
          <FreezeLine />
        </SheetView>
        <ScrollColumn>
          <ScrollButton aria-label="向上滚动"><Arrow dir="up" /></ScrollButton>
          <ScrollThumb $vertical />
          <Spacer />
          <ScrollButton aria-label="向下滚动"><Arrow dir="down" /></ScrollButton>
        </ScrollColumn>
      </SheetArea>
      <SheetTabs>
        <TabArrows><Arrow dir="left" color="#c0c0c0" /><Arrow dir="right" color="#c0c0c0" /></TabArrows>
        <FirstRule />
        {SHEETS.map(([name, w]) => (
          <SheetTab key={name} $w={w} $active={name === "RegulatoryQuality"} $plain={name === "GovernmentEffectiveness"}>
            {name}
          </SheetTab>
        ))}
        <AddSheet aria-label="新工作表"><Svg w={17} h={17}><circle cx="8.500" cy="8.500" r="7.800" stroke="#888" /><path d="M8.500 4.500v8M4.500 8.500h8" strokeWidth="2" /></Svg></AddSheet>
        <Spacer />
        <Dots $w={32}><DotsIcon /></Dots>
        <HScroll>
          <ScrollButton aria-label="向左滚动"><Arrow dir="left" /></ScrollButton>
          <ScrollThumb />
          <Spacer />
          <ScrollButton aria-label="向右滚动"><Arrow dir="right" /></ScrollButton>
        </HScroll>
      </SheetTabs>
      <StatusBar>
        <span>就绪</span>
        <Spacer />
        <ViewButton $on aria-label="普通"><Svg w={13} h={13}><path d="M.5.5h12v12H.5zM4.500.5v12M8.500.5v12M.5 4.500h12M.5 8.500h12" /></Svg></ViewButton>
        <ViewButton aria-label="页面布局"><Svg w={13} h={13}><path d="M.5.5h12v12H.5zM3.500 2.500h6v8h-6zM5 4.500h3M5 6.500h3M5 8.500h3" /></Svg></ViewButton>
        <ViewButton aria-label="分页预览"><Svg w={13} h={13}><path d="M.5.5h12v12H.5zM4.500.5v7M8.500.5v7M.5 7.500h8" /></Svg></ViewButton>
        <ZoomStep aria-label="缩小"><Svg w={7} h={7}><path d="M0 3.500h6" strokeWidth="2" /></Svg></ZoomStep>
        <ZoomRange type="range" aria-label="显示比例" min="0" max="100" defaultValue="40" />
        <ZoomStep aria-label="放大"><Svg w={8} h={8}><path d="M0 4h8M4 0v8" strokeWidth="2" /></Svg></ZoomStep>
        <ZoomValue>80%</ZoomValue>
      </StatusBar>
      <TaskBar><TaskItem /><Clock>10:51</Clock></TaskBar>
    </Window>
  );
}
